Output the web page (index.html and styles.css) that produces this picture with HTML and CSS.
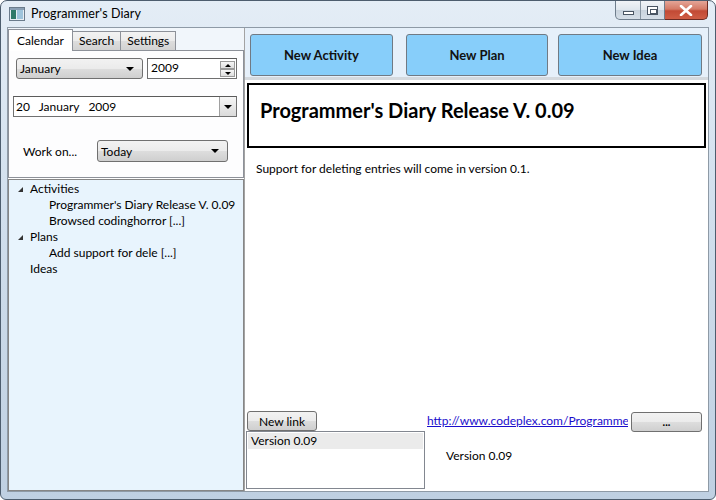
FILE: index.html
```html
<!DOCTYPE html>
<html>
<head>
<meta charset="utf-8">
<link rel="stylesheet" href="styles.css">
</head>
<body>
<div class="window">
  <div class="titlebar">
    <svg class="appicon" width="16" height="14" viewBox="0 0 16 14">
      <rect x="0.5" y="0.5" width="15" height="13" fill="#e8eef4" stroke="#6b7c8c"/>
      <rect x="2" y="3" width="5" height="9" fill="#2f7a6a"/>
      <rect x="8" y="3" width="6" height="9" fill="#9ec4dc"/>
      <rect x="1" y="1" width="14" height="2" fill="#8aa0b5"/>
    </svg>
    <span class="title">Programmer's Diary</span>
    <div class="controls">
      <div class="minmax">
        <div class="cbtn"><span class="minglyph"></span></div>
        <div class="cbtn"><span class="maxglyph"></span></div>
      </div>
      <div class="close">
        <svg width="14" height="11" viewBox="0 0 14 11"><path d="M2 1 L12 10 M12 1 L2 10" stroke="#fff" stroke-width="2.6" stroke-linecap="round"/></svg>
      </div>
    </div>
  </div>
  <div class="client">
    <div class="left">
      <div class="tabs">
        <div class="tab selected">Calendar</div>
        <div class="tab">Search</div>
        <div class="tab">Settings</div>
      </div>
      <div class="tabpanel">
        <div class="row1">
          <div class="combo month"><span>January</span><span class="arrow"></span></div>
          <div class="spin"><span>2009</span>
            <div class="spinbtns"><div class="sb"><span class="up"></span></div><div class="sb"><span class="down"></span></div></div>
          </div>
        </div>
        <div class="datepicker"><span class="dtext">20&nbsp;&nbsp;&nbsp;January&nbsp;&nbsp;&nbsp;2009</span><div class="dbtn"><span class="arrow"></span></div></div>
        <div class="workrow">
          <span class="worklbl">Work on...</span>
          <div class="combo today"><span>Today</span><span class="arrow"></span></div>
        </div>
      </div>
      <div class="tree">
        <div class="node"><span class="exp"></span>Activities</div>
        <div class="node child">Programmer's Diary Release V. 0.09</div>
        <div class="node child">Browsed codinghorror [...]</div>
        <div class="node"><span class="exp"></span>Plans</div>
        <div class="node child">Add support for dele [...]</div>
        <div class="node leaf">Ideas</div>
      </div>
    </div>
    <div class="right">
      <div class="toolbar">
        <button class="big b1">New Activity</button>
        <button class="big b2">New Plan</button>
        <button class="big b3">New Idea</button>
      </div>
      <div class="content">
        <div class="heading">Programmer's Diary Release V. 0.09</div>
        <div class="body">Support for deleting entries will come in version 0.1.</div>
        <div class="bottom">
          <div class="linkcol">
            <button class="small newlink">New link</button>
            <div class="listbox"><div class="item">Version 0.09</div></div>
          </div>
          <div class="detail">
            <div class="urlrow">
              <a class="url" href="#">http://www.codeplex.com/Programme</a>
              <button class="small dots">...</button>
            </div>
            <div class="vers">Version 0.09</div>
          </div>
        </div>
      </div>
    </div>
  </div>
</div>
</body>
</html>
```
FILE: styles.css
```css
* { box-sizing: border-box; }
html, body { margin: 0; padding: 0; }
body {
  width: 716px; height: 500px; overflow: hidden;
  font-family: Lato, "Open Sans", sans-serif;
  font-size: 12px; color: #000;
  background: #fff;
}
.window {
  width: 716px; height: 500px;
  border: 1px solid #4d5d6e;
  border-radius: 7px 7px 6px 6px;
  background: linear-gradient(180deg, #e4edf6 0%, #d6e3f0 30%, #cbdae9 60%, #bfd0e2 100%);
  display: flex; flex-direction: column;
  padding: 0 6px 7px 6px;
  overflow: hidden;
}
.titlebar {
  height: 26px; flex: none;
  display: flex; align-items: flex-start;
}
.appicon { margin: 6px 0 0 2px; }
.title { margin: 5px 0 0 6px; font-size: 12.5px; color: #000; letter-spacing: 0.1px; }
.controls { margin-left: auto; display: flex; margin-right: 1px; }
.minmax {
  display: flex; height: 19px;
  border: 1px solid #6e7d8c; border-top: none;
  border-radius: 0 0 0 5px;
  background: linear-gradient(180deg, #f1f4f7 0%, #dfe6ed 50%, #c9d3dd 51%, #d5dee7 100%);
}
.cbtn { width: 24px; display: flex; align-items: center; justify-content: center; }
.cbtn + .cbtn { border-left: 1px solid #8895a2; }
.minglyph { width: 11px; height: 4px; border: 1px solid #4a5563; background: #fff; margin-top: 5px; }
.maxglyph { width: 11px; height: 9px; border: 1px solid #4a5563; background: #fff; position: relative; }
.maxglyph::after { content: ""; position: absolute; left: 2px; top: 2px; width: 5px; height: 3px; border: 1px solid #4a5563; }
.close {
  width: 43px; height: 19px;
  border: 1px solid #6b2a22; border-top: none; border-left: none;
  border-radius: 0 0 5px 0;
  background: linear-gradient(180deg, #e4a597 0%, #d47a66 45%, #c24a35 55%, #cf5d45 100%);
  display: flex; align-items: center; justify-content: center;
}
.client {
  flex: 1; display: flex;
  border: 1px solid #8e9aa6;
  background: #fff;
  min-height: 0;
}
.left { width: 236px; flex: none; display: flex; flex-direction: column; }
.tabs { height: 22px; flex: none; display: flex; align-items: flex-end; padding-left: 0; background: #f1f6fb; }
.tab {
  height: 19px; padding: 0 6px; line-height: 17px;
  border: 1px solid #8d9199; border-bottom: none;
  background: linear-gradient(180deg, #f3f3f3 0%, #ebebeb 50%, #dddddd 51%, #d2d2d2 100%);
  font-size: 12px;
}
.tab + .tab { border-left: none; }
.tab.selected { height: 22px; background: #fff; line-height: 21px; padding: 0 8px; border-color: #8d9199; position: relative; top: 1px; }
.tabpanel {
  height: 128px; flex: none;
  border: 1px solid #8d9199;
  background: #fdfdfe;
  padding: 7px 5px 0 4px;
}
.row1 { display: flex; gap: 4px; padding-left: 3px; }
.combo {
  height: 21px; display: flex; align-items: center; justify-content: space-between;
  border: 1px solid #707070; border-radius: 3px;
  background: linear-gradient(180deg, #f2f2f2 0%, #ebebeb 50%, #dddddd 51%, #cfcfcf 100%);
  padding: 0 8px 0 3px;
  font-size: 12px;
}
.combo.month { width: 127px; }
.arrow { width: 0; height: 0; border-left: 4px solid transparent; border-right: 4px solid transparent; border-top: 4px solid #000; }
.spin {
  width: 90px; height: 21px; position: relative;
  border: 1px solid #707070; border-top-color: #5b5b5b;
  background: #fff;
  padding: 1px 0 0 3px;
  display: flex; justify-content: space-between;
}
.spinbtns { display: flex; flex-direction: column; width: 15px; margin: 1px 1px 1px 0; }
.sb { flex: 1; border: 1px solid #9a9a9a; background: linear-gradient(#f6f6f6, #dedede); display: flex; align-items: center; justify-content: center; }
.up { width: 0; height: 0; border-left: 3px solid transparent; border-right: 3px solid transparent; border-bottom: 3px solid #000; }
.down { width: 0; height: 0; border-left: 3px solid transparent; border-right: 3px solid transparent; border-top: 3px solid #000; }
.datepicker {
  margin-top: 17px; width: 224px; height: 21px;
  border: 1px solid #707070; border-top-color: #5b5b5b;
  background: #fff;
  display: flex; align-items: center; justify-content: space-between;
  padding-left: 2px;
}
.dtext { font-size: 12px; }
.dbtn { width: 17px; height: 19px; border-left: 1px solid #a0a0a0; background: linear-gradient(#f6f6f6, #dadada); display: flex; align-items: center; justify-content: center; }
.workrow { display: flex; align-items: center; margin-top: 23px; padding-left: 10px; }
.worklbl { width: 74px; font-size: 12px; }
.combo.today { width: 131px; padding-left: 3px; padding-right: 8px; height: 22px; }
.tree {
  flex: 1; margin-top: 1px;
  border: 1px solid #868686;
  background: #e8f4fd;
  padding-top: 1px;
}
.node { height: 16px; line-height: 16px; padding-left: 21px; position: relative; font-size: 12px; }
.node.child { padding-left: 40px; }
.exp { position: absolute; left: 9px; top: 6px; width: 0; height: 0; border-left: 5px solid transparent; border-bottom: 5px solid #333; }
.right {
  flex: 1; display: flex; flex-direction: column;
  border-left: 1px solid #a3a3a3;
}
.toolbar {
  height: 52px; flex: none;
  background: #e6f0fa;
  border-bottom: 3px solid #d4d9de;
  display: flex; align-items: flex-start;
  padding: 6px 0 0 5px;
}
.big {
  height: 42px;
  background: #87cefa;
  border: 1px solid #707a84; border-radius: 3px;
  font-family: Lato, sans-serif; font-weight: bold; font-size: 13px; color: #111;
  padding: 0;
}
.b1 { width: 143px; }
.b2 { width: 142px; margin-left: 13px; }
.b3 { width: 144px; margin-left: 10px; }
.content { flex: 1; display: flex; flex-direction: column; background: #fff; padding: 3px 0 2px 0; min-height: 0; }
.heading {
  margin: 0 2px 0 2px; height: 65px; flex: none;
  border: 2px solid #000;
  padding: 13px 0 0 11px;
  font-weight: bold; font-size: 20px;
}
.body { padding: 13px 0 0 11px; font-size: 12px; flex: 1; }
.bottom { display: flex; height: 78px; flex: none; }
.linkcol { width: 180px; flex: none; display: flex; flex-direction: column; padding-left: 1px; }
.small {
  font-family: Lato, sans-serif; font-size: 12px; color: #000;
  border: 1px solid #707070; border-radius: 3px;
  background: linear-gradient(180deg, #f2f2f2 0%, #ebebeb 50%, #dddddd 51%, #cfcfcf 100%);
  padding: 0;
}
.newlink { width: 70px; height: 20px; margin-left: 1px; }
.listbox { flex: 1; border: 1px solid #828790; background: #fff; padding: 1px; }
.item { background: #ebebeb; height: 16px; line-height: 16px; padding-left: 3px; }
.detail { flex: 1; display: flex; flex-direction: column; padding-left: 2px; }
.urlrow { display: flex; align-items: flex-start; padding-top: 1px; }
.url { width: 201px; flex: none; overflow: hidden; white-space: nowrap; color: #1a0dcc; text-decoration: underline; font-size: 12px; margin-top: 1px; }
.dots { width: 71px; height: 20px; margin-left: 3px; font-weight: bold; font-size: 11px; line-height: 10px; }
.vers { margin: 16px 0 0 19px; font-size: 12px; }
```
